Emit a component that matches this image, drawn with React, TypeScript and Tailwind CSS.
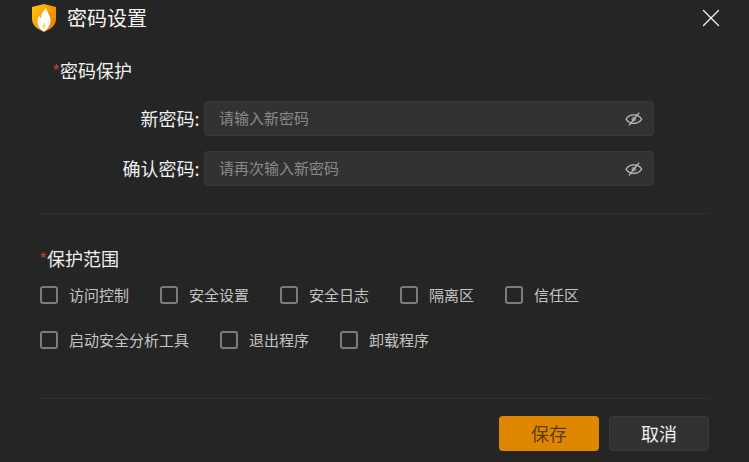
import React from 'react';
import { X } from 'lucide-react';

const EyeOff = () => (
  <svg width="18" height="14" viewBox="0 0 18 14" fill="none" stroke="#c2c2c2" strokeWidth="1.2" className="shrink-0">
    <path d="M1 7.200C3 4 5.700 2.900 8.800 2.900s5.900 1.100 7.900 4.300c-2 3.100-4.800 4.200-7.900 4.200S3 10.300 1 7.200Z" />
    <circle cx="8.800" cy="7.200" r="2.400" fill="#808080" stroke="none" />
    <path d="M14.200 .6 4 13.400" />
  </svg>
);

const Logo = () => (
  <svg width="24" height="28" viewBox="0 0 24 28">
    <defs>
      <linearGradient id="shield" x1="0" y1="0" x2="1" y2="0.7">
        <stop offset="0" stopColor="#ffc60a" />
        <stop offset="1" stopColor="#ee8200" />
      </linearGradient>
    </defs>
    <path d="M0 3 12 0l12 3v12c0 6-5 10-12 13C5 25 0 21 0 15Z" fill="url(#shield)" />
    <path d="M14 4c.5 4 4.500 7 4.500 12.500 0 5-3 8.500-6.500 11-4-2-6.500-6-6.500-10 0-3 1-4.500 2.300-6 0 1.500.4 2.500 1.200 3C9 9.500 11.500 7 14 4Z" fill="#fff" />
    <path d="M12.300 18c.2 1.600 1.500 2.600 1.500 4.300 0 1.200-.8 2.100-1.800 2.700-1.100-.6-1.800-1.500-1.800-2.700 0-1.800 1.900-2.700 2.100-4.300Z" fill="#fbd9a0" />
  </svg>
);

const PasswordRow = ({ label, placeholder }: { label: string; placeholder: string }) => (
  <div className="flex items-center">
    <label className="w-[199.500px] text-right text-[18px] leading-[35px] text-[#f0f0f0]">{label}:</label>
    <div className="ml-[4.500px] flex h-[35px] w-[450px] items-center justify-between rounded-[4px] border border-[#3a3a3a] bg-[#323232] pl-[14px] pr-[10px]">
      <span className="text-[15px] text-[#8a8a8a]">{placeholder}</span>
      <EyeOff />
    </div>
  </div>
);

const Check = ({ label }: { label: string }) => (
  <label className="flex h-[18px] items-center">
    <span className="h-[18px] w-[18px] rounded-[3px] border-2 border-[#7c7c7c]" />
    <span className="ml-[11px] text-[15px] leading-[18px] text-[#c4c4c4]">{label}</span>
  </label>
);

const SectionTitle = ({ title }: { title: string }) => (
  <h2 className="flex text-[18px] leading-[28px] font-normal text-[#f0f0f0]">
    <span className="-ml-[1px] w-[8px] text-[#c0392b]">*</span>
    {title}
  </h2>
);

export default function App() {
  return (
    <div className="h-[462px] w-[749px] overflow-hidden bg-[#252525] font-['Microsoft_YaHei','Noto_Sans_CJK_SC',sans-serif]">
      <header className="flex h-9 items-start justify-between pl-8 pr-[23px] pt-1">
        <div className="flex items-center">
          <Logo />
          <h1 className="ml-[11px] text-[20px] leading-[28px] font-normal text-[#f5f5f5]">密码设置</h1>
        </div>
        <X size={30} strokeWidth={1.1} color="#eeeeee" className="-mt-[1px]" />
      </header>

      <section className="pl-[53px] pt-5">
        <SectionTitle title="密码保护" />
      </section>
      <div className="mt-[17px] flex flex-col gap-[15px]">
        <PasswordRow label="新密码" placeholder="请输入新密码" />
        <PasswordRow label="确认密码" placeholder="请再次输入新密码" />
      </div>

      <hr className="mx-10 mt-[27px] border-[#323232]" />

      <section className="px-10 pt-[30px]">
        <SectionTitle title="保护范围" />
        <div className="mt-[14px] flex gap-[31px]">
          <Check label="访问控制" />
          <Check label="安全设置" />
          <Check label="安全日志" />
          <Check label="隔离区" />
          <Check label="信任区" />
        </div>
        <div className="mt-[27px] flex gap-[31px]">
          <Check label="启动安全分析工具" />
          <Check label="退出程序" />
          <Check label="卸载程序" />
        </div>
      </section>

      <hr className="mx-10 mt-[49px] border-[#323232]" />

      <footer className="flex justify-end gap-[10px] pr-10 pt-[17px]">
        <button className="h-[35px] w-[100px] rounded-[4px] bg-[#df8700] text-[18px] text-[#5e3b08]">保存</button>
        <button className="h-[35px] w-[100px] rounded-[4px] border border-[#3a3a3a] bg-[#323232] text-[18px] text-[#f0f0f0]">取消</button>
      </footer>
    </div>
  );
}
